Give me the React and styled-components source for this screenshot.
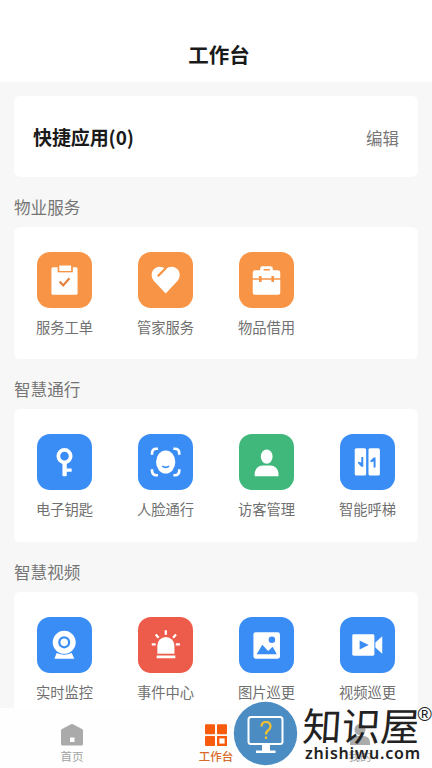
import React from 'react';
import styled, { createGlobalStyle } from 'styled-components';

const Global = createGlobalStyle`
  * { box-sizing: border-box; }
  body { margin: 0; background: #f7f7f7; }
`;

const Page = styled.div`
  position: relative;
  width: 432px;
  height: 768px;
  display: flex;
  flex-direction: column;
  overflow: hidden;
  background: #f7f7f7;
  color: #707070;
  font-family: 'Noto Sans CJK SC', sans-serif;
`;

const Header = styled.header`
  flex: none;
  height: 82px;
  padding: 25px 0 0 6px;
  display: flex;
  align-items: center;
  justify-content: center;
  background: #fff;
`;

const Title = styled.h1`
  margin: 0;
  font-size: 20.5px;
  font-weight: 700;
  line-height: 30px;
  color: #1a1a1a;
`;

const Content = styled.main`
  flex: 1;
  min-height: 0;
  overflow: hidden;
  padding: 14px 14px 0;
`;

const QuickCard = styled.section`
  height: 81px;
  padding: 0 19px;
  display: flex;
  align-items: center;
  justify-content: space-between;
  border-radius: 6px;
  background: #fff;
`;

const QuickTitle = styled.h2`
  margin: 0;
  font-size: 19px;
  font-weight: 700;
  line-height: 28px;
  letter-spacing: -0.1px;
  color: #1a1a1a;
`;

const EditButton = styled.button`
  border: 0;
  padding: 2px 0 0;
  background: none;
  font: inherit;
  font-size: 16.5px;
  color: #777;
`;

const SectionTitle = styled.h3`
  margin: 0;
  height: 50px;
  padding-top: 12px;
  font-size: 16.6px;
  font-weight: 400;
  line-height: 36px;
  color: #757575;
`;

const AppGrid = styled.div`
  display: grid;
  grid-template-columns: repeat(4, 1fr);
  height: 132.4px;
  padding-top: 25px;
  border-radius: 6px;
  background: #fff;
`;

const AppItem = styled.div`
  display: flex;
  flex-direction: column;
  align-items: center;
  gap: 8px;
  font-size: 14.3px;
  line-height: 22px;
  white-space: nowrap;
`;

const Tile = styled.svg`
  flex: none;
  width: 55px;
  height: 56px;
  border-radius: 13px;
  background: ${(p) => p.$color};
`;

const TabBar = styled.nav`
  flex: none;
  height: 60px;
  display: grid;
  grid-template-columns: repeat(3, 1fr);
  background: #fefefe;
`;

const Tab = styled.div`
  display: flex;
  flex-direction: column;
  align-items: center;
  padding-top: 14px;
  gap: 1px;
  font-size: 11.5px;
  line-height: 18px;
  color: ${(p) => (p.$active ? '#d8692c' : '#a2a2a2')};
  font-weight: ${(p) => (p.$active ? 500 : 400)};
`;

const TabIcon = styled.svg`
  width: 24px;
  height: 24px;
  flex: none;
`;

const Watermark = styled.div`
  position: absolute;
  left: 233px;
  top: 701px;
  width: 199px;
  height: 67px;
  display: flex;
  gap: 5px;
`;

const Emblem = styled.svg`
  width: 65px;
  height: 65px;
  flex: none;
`;

const Brand = styled.div`
  position: relative;
  display: flex;
  flex-direction: column;
  color: #222;
`;

const BrandName = styled.div`
  height: 42px;
  font-size: 39px;
  font-weight: 400;
  line-height: 46px;
  white-space: nowrap;
  transform: skewX(-4deg);
`;

const BrandUrl = styled.div`
  padding-left: 2px;
  font-family: 'Noto Sans', sans-serif;
  font-weight: 600;
  font-size: 16px;
  letter-spacing: 0.8px;
  line-height: 20px;
`;

const Registered = styled.span`
  position: absolute;
  left: 114.5px;
  top: 3px;
  font-family: 'Liberation Sans', sans-serif;
  font-weight: 400;
  font-size: 19.5px;
  line-height: 20px;
`;

const ORANGE = '#f79446';
const BLUE = '#398df5';
const GREEN = '#40b87c';
const RED = '#ed5b4a';

const glyphs = {
  order: (
    <>
      <rect x="14.7" y="15" width="26.6" height="28" rx="1.6" />
      <rect x="21" y="12" width="15.5" height="8.2" fill={ORANGE} />
      <path d="M22.7 13.3h12v5.500h-12z" />
      <path d="m23 29.500 3.700 4 6.300-7.300" fill="none" stroke="#e58240" strokeWidth="2.300" />
    </>
  ),
  heart: (
    <>
      <path d="M28.200 41.800 15.800 28.500C9.500 19.500 20 10 28.200 17c8.300-7 18.700 2.500 12.400 11.500z" />
      <path d="m20.800 23.500 7.200-7.200" fill="none" stroke={ORANGE} strokeWidth="2.300" strokeLinecap="round" />
    </>
  ),
  toolbox: (
    <>
      <path fillRule="evenodd" d="M21.500 18v-1.500q0-2.500 2.500-2.500h8q2.500 0 2.500 2.500V18h5q2.500 0 2.500 2.500v5.800H14v-5.800q0-2.500 2.500-2.500zm3.500.3h6.500v-1.500H25z" />
      <path d="M14 27.800h28v13.200q0 2-2 2H16q-2 0-2-2z" />
      <path d="M21.700 24v6M34.300 24v6" stroke={ORANGE} strokeWidth="2.600" />
    </>
  ),
  key: (
    <>
      <circle cx="28" cy="22" r="6.300" fill="none" stroke="#fff" strokeWidth="3.800" />
      <path d="M25.900 29h4.400v5.500h5V38h-5v4q-2.200 1.200-4.400 0z" />
    </>
  ),
  face: (
    <>
      <path d="M14.300 20.500v-1.500q0-4.500 4.500-4.500h1.500M36 14.500h1.500q4.500 0 4.500 4.500v1.500M14.300 35.500V37q0 4.500 4.500 4.500h1.500M36 41.500h1.500q4.500 0 4.500-4.500v-1.500" fill="none" stroke="#fff" strokeWidth="2.700" />
      <ellipse cx="28.200" cy="28" rx="9.800" ry="11.700" />
      <path d="M24.700 32.200q3.500 2.600 7 0" fill="none" stroke={BLUE} strokeWidth="1.800" />
    </>
  ),
  visitor: (
    <>
      <ellipse cx="28.200" cy="22.500" rx="6" ry="7.300" />
      <path d="M16 42.500v-2.500c0-5 4-8.500 8.500-8.500h7.200c4.500 0 8.500 3.500 8.500 8.500v2.500z" />
    </>
  ),
  lift: (
    <>
      <rect x="15" y="14" width="11.600" height="27.800" rx="1.600" />
      <rect x="29" y="14" width="11.600" height="27.800" rx="1.600" />
      <path d="M21.700 22.800h2v10h-2l-3.300-3.500v-1.500l3.300.8zM34.200 33.500h2v-10.200h-2l-3.300 3.500v1.500l3.300-.8z" fill={BLUE} />
    </>
  ),
  camera: (
    <>
      <circle cx="27.700" cy="25.300" r="11.700" />
      <circle cx="27.700" cy="25.300" r="5" fill="none" stroke={BLUE} strokeWidth="2.300" />
      <path d="M20 36.200q7.700 3.500 15.400 0l2.600 5.800H17.700z" />
    </>
  ),
  alarm: (
    <>
      <path d="M19.700 36.800V28.500a8.700 8.700 0 0 1 17.400 0v8.300z" />
      <path d="M19 38.800h19v2.800H19z" />
      <path d="M28.300 13v4.500M18 17.300l3 3.400M38.700 17.300l-3 3.400M14 27.300h4M38.500 27.300h4.200" stroke="#fff" strokeWidth="2.300" />
    </>
  ),
  image: (
    <>
      <rect x="14.700" y="15" width="27" height="27" rx="2.200" />
      <circle cx="33.500" cy="22.700" r="3.300" fill={BLUE} />
      <path d="m18 37.300 5.700-9.500 6 6.400 4.600-4.400 4.200 7.500z" fill={BLUE} />
    </>
  ),
  video: (
    <>
      <rect x="12.500" y="17" width="22.500" height="22" rx="1.500" />
      <path d="m36 25.500 7-6.500v18l-7-6.500z" />
      <path d="m20 23.500 9.200 4.600L20 32.700z" fill={BLUE} />
    </>
  ),
};

const sections = [
  { title: '物业服务', items: [['order', '服务工单', ORANGE], ['heart', '管家服务', ORANGE], ['toolbox', '物品借用', ORANGE]] },
  { title: '智慧通行', items: [['key', '电子钥匙', BLUE], ['face', '人脸通行', BLUE], ['visitor', '访客管理', GREEN], ['lift', '智能呼梯', BLUE]] },
  { title: '智慧视频', items: [['camera', '实时监控', BLUE], ['alarm', '事件中心', RED], ['image', '图片巡更', BLUE], ['video', '视频巡更', BLUE]] },
];

export default function App() {
  return (
    <Page>
      <Global />
      <Header><Title>工作台</Title></Header>
      <Content>
        <QuickCard>
          <QuickTitle>快捷应用(0)</QuickTitle>
          <EditButton>编辑</EditButton>
        </QuickCard>
        {sections.map((s) => (
          <section key={s.title}>
            <SectionTitle>{s.title}</SectionTitle>
            <AppGrid>
              {s.items.map(([icon, label, color]) => (
                <AppItem key={label}>
                  <Tile viewBox="0 0 56 56" fill="#fff" $color={color}>{glyphs[icon]}</Tile>
                  <span>{label}</span>
                </AppItem>
              ))}
            </AppGrid>
          </section>
        ))}
      </Content>
      <TabBar>
        <Tab>
          <TabIcon viewBox="0 0 24 24">
            <path d="M1 8.500q0-1 1-1.600L11 2.300q1-.5 2 0l9 4.600q1 .6 1 1.600V22q0 1.500-1.500 1.500h-19Q1 23.500 1 22z" fill="#aaa" />
            <path d="M10 15.500h4.500V20H10z" fill="#fff" />
          </TabIcon>
          首页
        </Tab>
        <Tab $active>
          <TabIcon viewBox="0 0 24 24" fill="#f95b0c">
            <rect x="1" y="2.300" width="10" height="10" rx="1" />
            <rect x="13" y="2.300" width="10" height="10" rx="1" />
            <rect x="1" y="14" width="10" height="10" rx="1" />
            <rect x="14.200" y="15.200" width="7.600" height="7.600" fill="#fff" stroke="#f95b0c" strokeWidth="2.400" />
          </TabIcon>
          工作台
        </Tab>
        <Tab>
          <TabIcon viewBox="0 0 24 24" fill="#aaa">
            <circle cx="12" cy="7.500" r="5.500" />
            <path d="M2 23v-2q0-7 7-7h6q7 0 7 7v2z" />
          </TabIcon>
          我的
        </Tab>
      </TabBar>
      <Watermark>
        <Emblem viewBox="0 0 65 65">
          <circle cx="32.500" cy="32.500" r="31.700" fill="#4b8cc3" />
          <rect x="15.500" y="16" width="34" height="27" rx="2.500" fill="none" stroke="#fff" strokeWidth="2" />
          <path d="M29 43h8v6.500h5.500v2.500H23v-2.500h6z" fill="#fff" />
          <path d="M28.500 25.500q0-4.500 4.500-4.500t4.500 4.500q0 2.500-2.500 4-2 1.500-2 4M33 35.500v2.500" fill="none" stroke="#f5c22d" strokeWidth="2.200" />
        </Emblem>
        <Brand>
          <BrandName>知识屋</BrandName>
          <BrandUrl>zhishiwu.com</BrandUrl>
          <Registered>®</Registered>
        </Brand>
      </Watermark>
    </Page>
  );
}
